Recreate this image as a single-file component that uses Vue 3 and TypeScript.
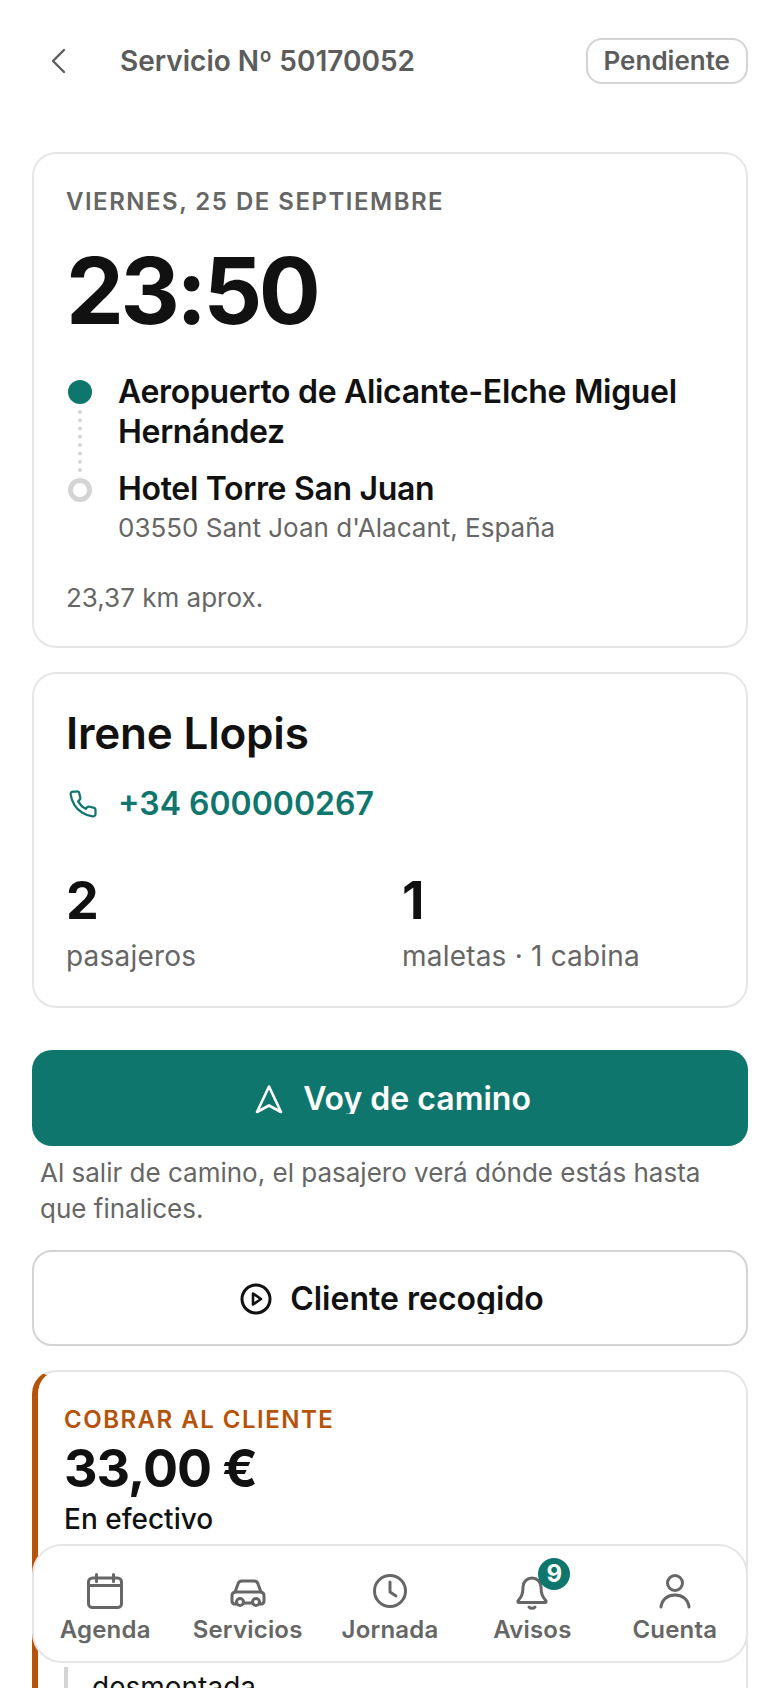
<script setup lang="ts">
interface NavItem {
  key: string
  label: string
}

const navItems: NavItem[] = [
  { key: 'agenda', label: 'Agenda' },
  { key: 'servicios', label: 'Servicios' },
  { key: 'jornada', label: 'Jornada' },
  { key: 'avisos', label: 'Avisos' },
  { key: 'cuenta', label: 'Cuenta' },
]
</script>

<template>
  <div class="screen">
    <header class="topbar">
      <div class="topbar-left">
        <button class="back" aria-label="Volver">
          <svg width="16" height="26" viewBox="0 0 16 26" fill="none" stroke="currentColor" stroke-width="2.4" stroke-linecap="round" stroke-linejoin="round">
            <path d="M14 2 3 13l11 11" />
          </svg>
        </button>
        <h1 class="title">Servicio Nº 50170052</h1>
      </div>
      <span class="status">Pendiente</span>
    </header>

    <main class="content">
      <section class="card trip">
        <div class="date">VIERNES, 25 DE SEPTIEMBRE</div>
        <div class="time">23:50</div>
        <div class="route">
          <div class="stop">
            <span class="dot filled"></span>
            <span class="link"></span>
            <div class="place">Aeropuerto de Alicante-Elche Miguel Hernández</div>
          </div>
          <div class="stop last">
            <span class="dot ring"></span>
            <div class="place">Hotel Torre San Juan</div>
            <div class="address">03550 Sant Joan d'Alacant, España</div>
          </div>
        </div>
        <div class="distance">23,37 km aprox.</div>
      </section>

      <section class="card client">
        <div class="name">Irene Llopis</div>
        <a class="phone">
          <svg width="30" height="30" viewBox="0 0 24 24" fill="none" stroke="currentColor" stroke-width="1.8" stroke-linecap="round" stroke-linejoin="round">
            <path d="M22 16.92v3a2 2 0 0 1-2.18 2 19.79 19.79 0 0 1-8.63-3.07 19.5 19.5 0 0 1-6-6 19.79 19.79 0 0 1-3.07-8.67A2 2 0 0 1 4.11 2h3a2 2 0 0 1 2 1.72 12.84 12.84 0 0 0 .7 2.81 2 2 0 0 1-.45 2.11L8.09 9.91a16 16 0 0 0 6 6l1.27-1.27a2 2 0 0 1 2.11-.45 12.84 12.84 0 0 0 2.81.7A2 2 0 0 1 22 16.92z" />
          </svg>
          <span>+34 600000267</span>
        </a>
        <div class="stats">
          <div>
            <div class="stat-num">2</div>
            <div class="stat-label">pasajeros</div>
          </div>
          <div>
            <div class="stat-num">1</div>
            <div class="stat-label">maletas · 1 cabina</div>
          </div>
        </div>
      </section>

      <button class="action primary">
        <svg width="32" height="32" viewBox="0 0 32 32" fill="none" stroke="currentColor" stroke-width="2.6" stroke-linejoin="round">
          <path d="M16 3.500 28 29l-12-6.500L4 29z" />
        </svg>
        <span class="action-label">Voy de camino</span>
      </button>
      <p class="hint">Al salir de camino, el pasajero verá dónde estás hasta que finalices.</p>
      <button class="action secondary">
        <svg width="32" height="32" viewBox="0 0 32 32" fill="none" stroke="currentColor" stroke-width="3" stroke-linejoin="round">
          <circle cx="16" cy="16" r="14" />
          <path d="M13 10.500 21 16l-8 5.500z" stroke-width="2.6" />
        </svg>
        <span class="action-label">Cliente recogido</span>
      </button>

      <section class="card payment">
        <div class="pay-label">COBRAR AL CLIENTE</div>
        <div class="amount">33,00 €</div>
        <div class="method">En efectivo</div>
        <div class="note">desmontada</div>
      </section>
    </main>

    <nav class="tabbar">
      <div v-for="item in navItems" :key="item.key" class="tab">
        <div class="tab-icon">
          <svg v-if="item.key === 'agenda'" width="38" height="38" viewBox="0 0 38 38" fill="none" stroke="currentColor" stroke-width="3" stroke-linecap="round" stroke-linejoin="round">
            <rect x="2.500" y="5" width="33" height="29.500" rx="4" />
            <path d="M2.500 12.500h33M10.500 1.500v7M27.500 1.500v7" />
          </svg>
          <svg v-else-if="item.key === 'servicios'" width="38" height="38" viewBox="0 0 38 38" fill="none" stroke="currentColor" stroke-width="3" stroke-linecap="round" stroke-linejoin="round">
            <path d="M7 31H5a3 3 0 0 1-2-3v-5a4 4 0 0 1 3-4l3-8a4 4 0 0 1 4-3h12a4 4 0 0 1 4 3l3 8a4 4 0 0 1 3 4v5a3 3 0 0 1-2 3h-2" />
            <path d="M6 19h26M15 30h8" />
            <circle cx="11" cy="29" r="3.500" />
            <circle cx="27" cy="29" r="3.500" />
          </svg>
          <svg v-else-if="item.key === 'jornada'" width="38" height="38" viewBox="0 0 38 38" fill="none" stroke="currentColor" stroke-width="3" stroke-linecap="round" stroke-linejoin="round">
            <circle cx="19" cy="18" r="15.500" />
            <path d="M19 9v10l6 4" />
          </svg>
          <svg v-else-if="item.key === 'avisos'" width="38" height="38" viewBox="0 0 38 38" fill="none" stroke="currentColor" stroke-width="3" stroke-linecap="round" stroke-linejoin="round">
            <path d="M19 5a9 9 0 0 0-9 9c0 8-2 10-5 14a1 1 0 0 0 1 1.500h26a1 1 0 0 0 1-1.500c-3-4-5-6-5-14a9 9 0 0 0-9-9" />
            <path d="M16 34a4 4 0 0 0 6 0" />
          </svg>
          <svg v-else width="38" height="38" viewBox="0 0 38 38" fill="none" stroke="currentColor" stroke-width="3" stroke-linecap="round" stroke-linejoin="round">
            <circle cx="19" cy="10" r="7.500" />
            <path d="M5 34c1-8 7-12 14-12s13 4 14 12" />
          </svg>
          <span v-if="item.key === 'avisos'" class="badge">9</span>
        </div>
        <span class="tab-label">{{ item.label }}</span>
      </div>
    </nav>
  </div>
</template>

<style scoped>
.screen {
  position: relative;
  width: 780px;
  height: 1688px;
  overflow: hidden;
  background: #fff;
  font-family: Inter, "Noto Sans", sans-serif;
  color: #111;
}
.topbar {
  display: flex;
  align-items: center;
  justify-content: space-between;
  padding: 38px 32px 0;
}
.topbar-left { display: flex; align-items: center; }
.back {
  display: flex;
  width: 88px;
  padding: 0 0 0 18px;
  border: 0;
  background: none;
  color: #5c5c5c;
}
.title {
  margin: 0;
  font-size: 28px;
  line-height: 40px;
  font-weight: 600;
  color: #5c5c5c;
}
.status {
  box-sizing: border-box;
  height: 46px;
  padding: 0 16px;
  border: 2px solid #d4d4d4;
  border-radius: 16px;
  font-size: 26px;
  line-height: 42px;
  font-weight: 600;
  color: #5c5c5c;
}
.content {
  display: flex;
  flex-direction: column;
  padding: 68px 32px 0;
}
.card {
  box-sizing: border-box;
  border: 2px solid #e6e6e6;
  border-radius: 24px;
  padding: 32px;
}
.date {
  font-size: 24px;
  line-height: 32px;
  font-weight: 600;
  letter-spacing: 1.5px;
  color: #666;
}
.time {
  margin-top: 27px;
  font-size: 92px;
  line-height: 92px;
  font-weight: 700;
  letter-spacing: -3.5px;
  color: #111;
}
.route {
  display: flex;
  flex-direction: column;
  gap: 17px;
  margin-top: 35px;
}
.stop {
  position: relative;
  padding-left: 52px;
}
.dot {
  position: absolute;
  box-sizing: border-box;
  left: 2px;
  top: 8px;
  width: 24px;
  height: 24px;
  border-radius: 50%;
}
.dot.filled { background: #0f766e; }
.dot.ring { top: 9px; border: 5px solid #d4d4d4; }
.link {
  position: absolute;
  left: 12px;
  top: 38px;
  height: 62px;
  border-left: 4px dotted #d4d4d4;
}
.place {
  font-size: 32px;
  line-height: 40px;
  font-weight: 600;
  letter-spacing: -0.32px;
  color: #111;
}
.address {
  font-size: 26px;
  line-height: 38px;
  color: #666;
}
.distance {
  margin-top: 35px;
  font-size: 26px;
  line-height: 32px;
  color: #666;
}
.client { margin-top: 24px; }
.name {
  font-size: 44px;
  line-height: 54px;
  font-weight: 600;
  letter-spacing: -0.2px;
  color: #111;
}
.phone {
  display: flex;
  align-items: center;
  gap: 20px;
  margin-top: 24px;
  padding-left: 2px;
  color: #0f766e;
  font-size: 32px;
  line-height: 40px;
  font-weight: 600;
}
.stats {
  display: grid;
  grid-template-columns: 1fr 1fr;
  gap: 24px;
  margin-top: 48px;
}
.stat-num {
  font-size: 52px;
  line-height: 58px;
  font-weight: 700;
  color: #111;
}
.stat-label {
  margin-top: 8px;
  font-size: 28px;
  line-height: 36px;
  letter-spacing: 0.2px;
  color: #666;
}
.action {
  display: flex;
  align-items: center;
  justify-content: center;
  gap: 18px;
  box-sizing: border-box;
  height: 96px;
  padding: 2px 0 0 4px;
  border-radius: 20px;
  font-family: inherit;
  font-size: 32px;
  font-weight: 600;
}
.action-label {
  display: block;
  line-height: 30px;
  overflow: hidden;
}
.primary {
  margin-top: 42px;
  border: 0;
  background: #0f766e;
  color: #fff;
}
.hint {
  margin: 9px 0 0;
  padding: 0 8px;
  font-size: 26px;
  line-height: 36px;
  color: #666;
}
.secondary {
  margin-top: 23px;
  border: 2px solid #d4d4d4;
  background: #fff;
  color: #111;
}
.payment {
  margin-top: 24px;
  padding-left: 26px;
  border-left: 6px solid #b45309;
}
.pay-label {
  font-size: 24px;
  line-height: 32px;
  font-weight: 600;
  letter-spacing: 1.5px;
  color: #b45309;
}
.amount {
  margin-top: 2px;
  font-size: 52px;
  line-height: 62px;
  font-weight: 700;
  letter-spacing: -1px;
  color: #111;
}
.method {
  margin-top: 1px;
  font-size: 28px;
  line-height: 36px;
  font-weight: 500;
  color: #111;
}
.note {
  margin-top: 130px;
  padding: 0 0 0 24px;
  border-left: 4px solid #d4d4d4;
  font-size: 28px;
  line-height: 40px;
  color: #111;
}
.tabbar {
  position: absolute;
  left: 32px;
  right: 32px;
  top: 1544px;
  box-sizing: border-box;
  height: 119px;
  display: grid;
  grid-template-columns: repeat(5, 1fr);
  padding-top: 27px;
  background: #fff;
  border: 2px solid #e6e6e6;
  border-radius: 30px;
}
.tab {
  display: flex;
  flex-direction: column;
  align-items: center;
  color: #666;
}
.tab-icon {
  position: relative;
  width: 38px;
  height: 38px;
}
.tab-icon svg { display: block; }
.tab-label {
  margin-top: 3px;
  font-size: 24px;
  line-height: 32px;
  font-weight: 600;
  letter-spacing: 0.2px;
}
.badge {
  position: absolute;
  left: 25px;
  top: -15px;
  width: 32px;
  height: 32px;
  border-radius: 50%;
  background: #0f766e;
  color: #fff;
  font-size: 24px;
  line-height: 32px;
  font-weight: 700;
  text-align: center;
}
</style>
